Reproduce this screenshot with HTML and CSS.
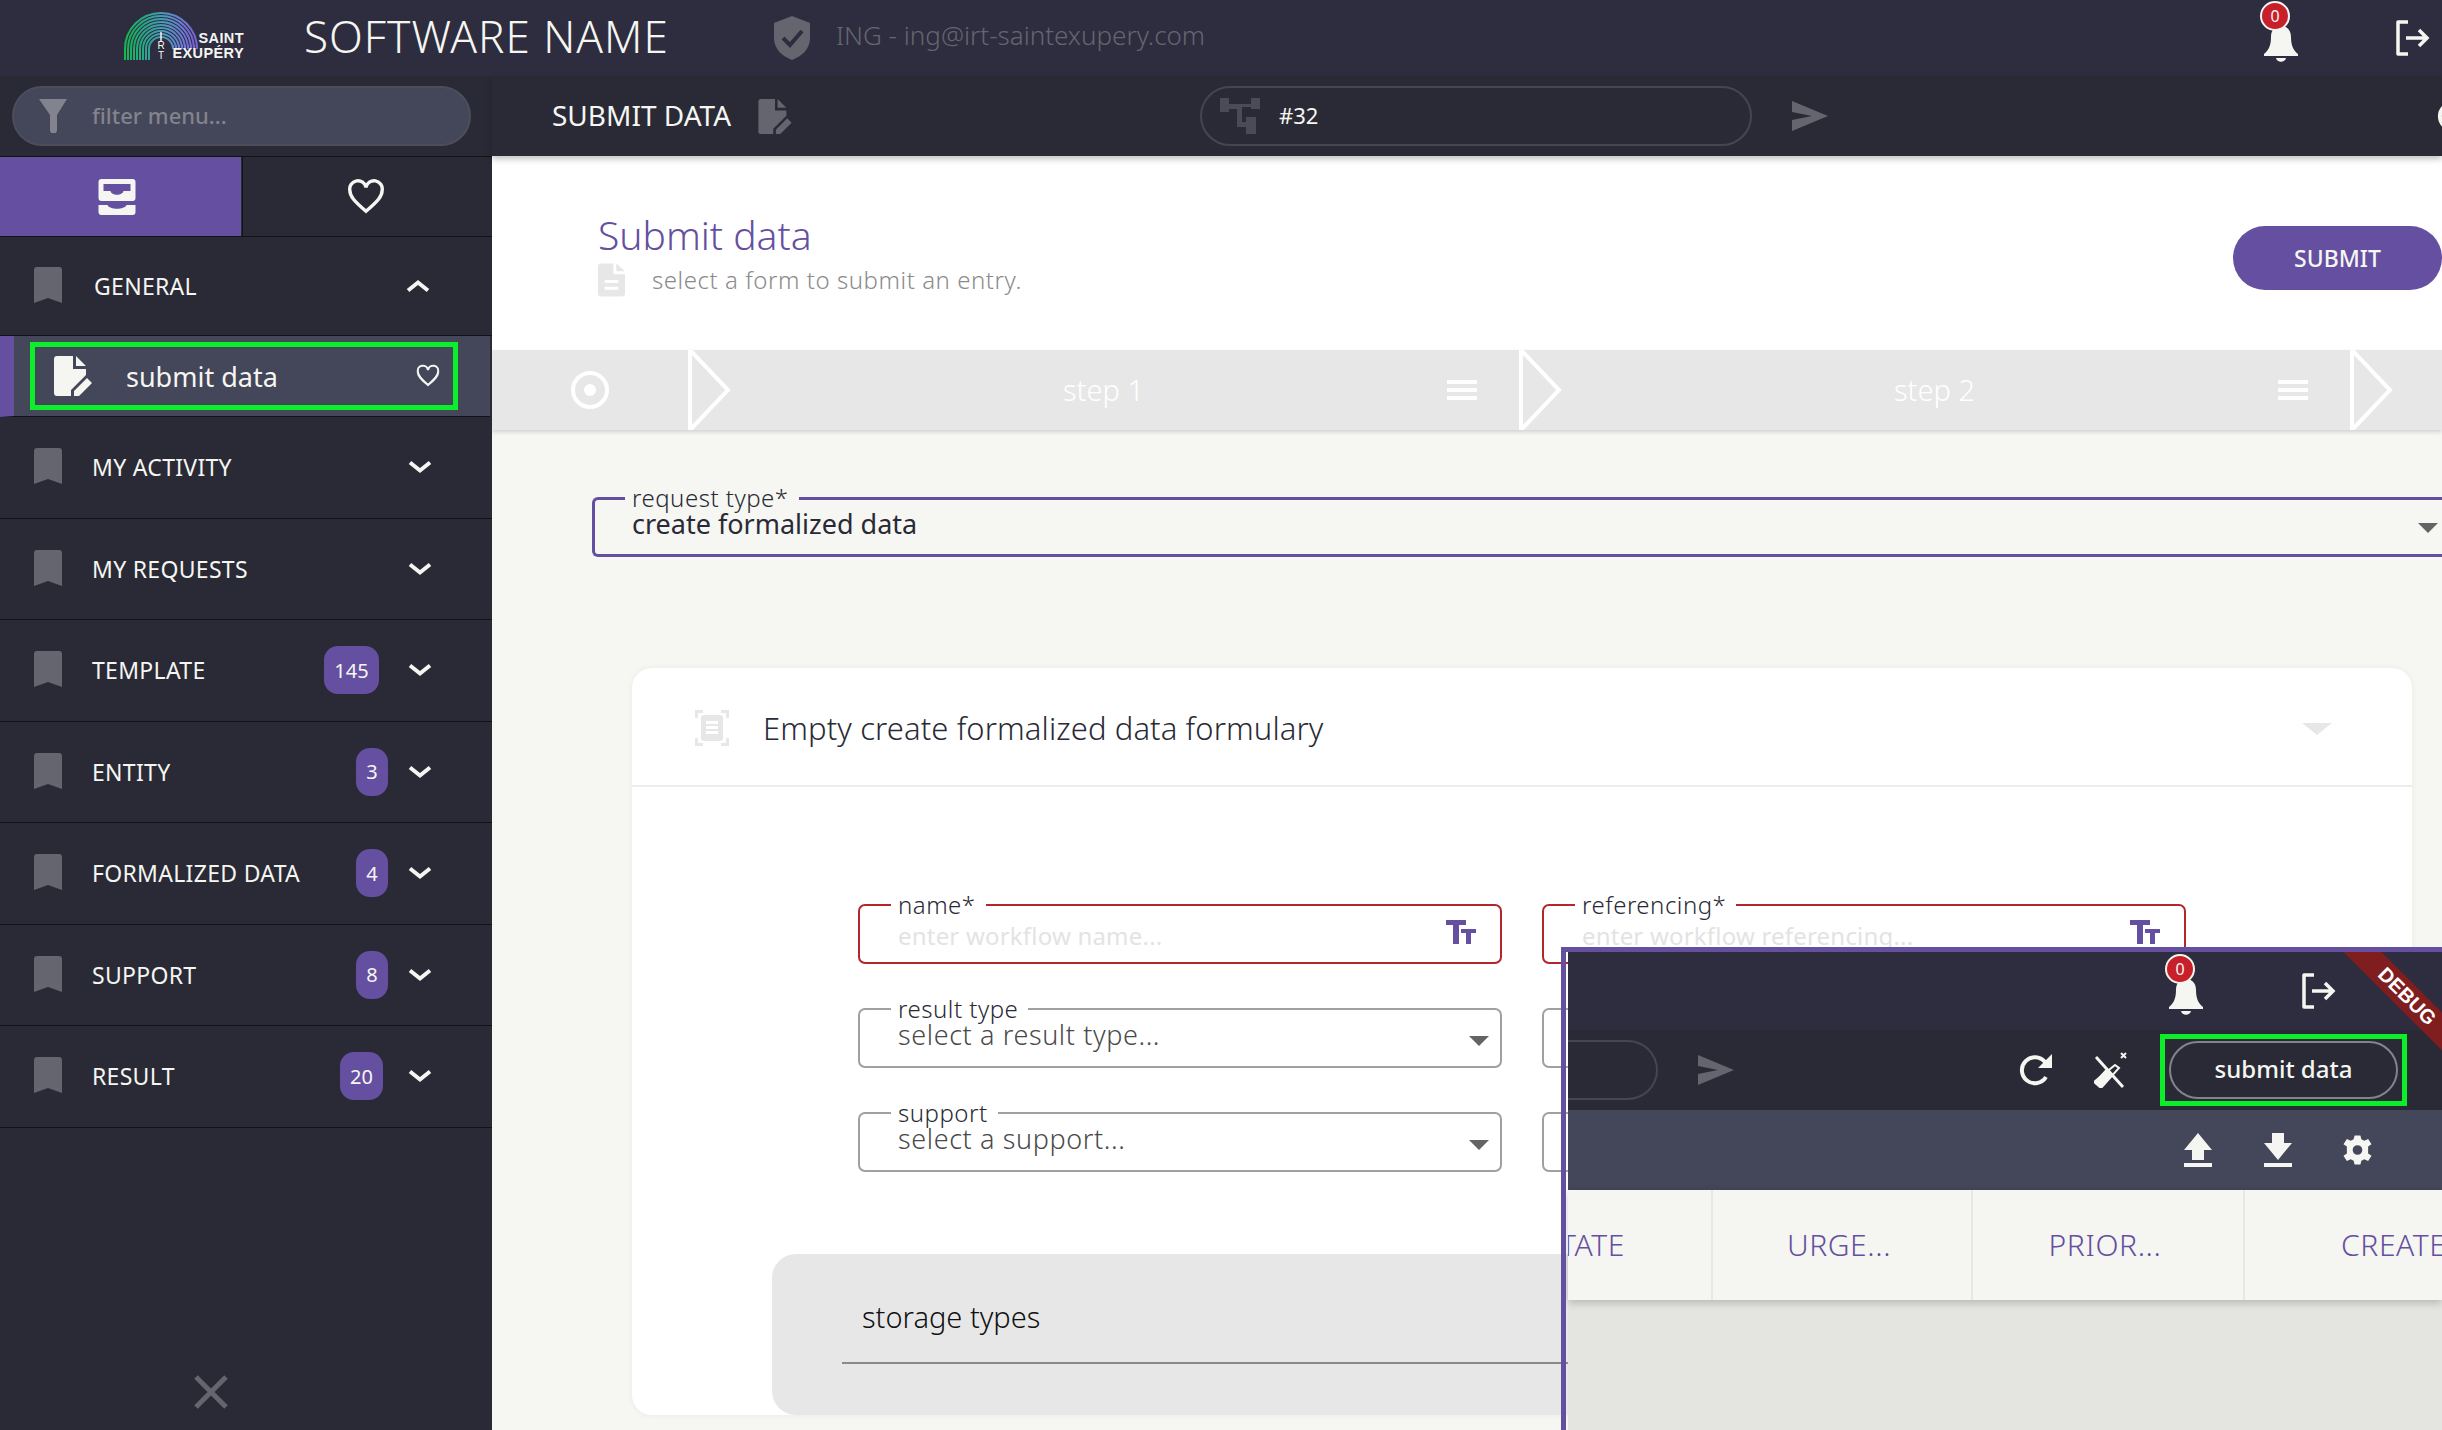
FILE: index.html
```html
<!DOCTYPE html>
<html lang="en">
<head>
  <meta charset="UTF-8" />
  <title>Software Name - Submit data</title>
  <link rel="stylesheet" href="styles.css">
</head>
<body>
  <!-- icon sprite -->
  <svg class="sprite" aria-hidden="true">
    <symbol id="i-bookmark" viewBox="0 0 28 36"><path d="M3 0H25a3 3 0 0 1 3 3V36L14 31 0 36V3a3 3 0 0 1 3-3z"/></symbol>
    <symbol id="i-chevron" viewBox="0 0 24 14"><path d="M2 2.500 12 10.500 22 2.500" fill="none" stroke="currentColor" stroke-width="4"/></symbol>
    <symbol id="i-heart" viewBox="0 0 40 36"><path d="M20 33C7 22 3 17 3 11a8.500 8.500 0 0 1 17-3 8.500 8.500 0 0 1 17 3c0 6-4 11-17 22z" fill="none" stroke="currentColor" stroke-width="3.600"/></symbol>
    <symbol id="i-file-edit" viewBox="0 0 38 40"><path d="M3 0H19V13H32V19L17 34V40H3a3 3 0 0 1-3-3V3a3 3 0 0 1 3-3zM22 0 32 10H22zM33 22l5 5-13 13h-5v-5z" fill-rule="evenodd"/></symbol>
    <symbol id="i-funnel" viewBox="0 0 28 34"><path d="M0 0H28L18 16V31a3 3 0 0 1-7 0V16z"/></symbol>
    <symbol id="i-inbox" viewBox="0 0 37 36"><path d="M3 0H34a3 3 0 0 1 3 3V19a3 3 0 0 1-3 3H3a3 3 0 0 1-3-3V3a3 3 0 0 1 3-3zM5 5V12H12c1 5 12 5 13 0H32V5zM0 26H9c2 5 17 5 19 0H37V33a3 3 0 0 1-3 3H3a3 3 0 0 1-3-3z" fill-rule="evenodd"/></symbol>
    <symbol id="i-shield" viewBox="0 0 36 44"><path d="M18 0 36 7V22C36 33 28 40 18 44 8 40 0 33 0 22V7z"/><path d="M9 22l7 7 12-14" fill="none" stroke="#2e2d3f" stroke-width="4"/></symbol>
    <symbol id="i-bell" viewBox="0 0 36 36"><path d="M18 0c6 0 10 4 10 11 0 8 2 13 7 17v2H1v-2c5-4 7-9 7-17C8 4 12 0 18 0zM13 32h10c-1 5-9 5-10 0z"/></symbol>
    <symbol id="i-logout" viewBox="0 0 36 36"><path d="M14 2H4V34H14" fill="none" stroke="currentColor" stroke-width="3.500" stroke-linejoin="round"/><path d="M12 18H33M25 10l8 8-8 8" fill="none" stroke="currentColor" stroke-width="3.500"/></symbol>
    <symbol id="i-send" viewBox="0 0 36 30"><path d="M0 0 36 15 0 30V19L20 15 0 11z"/></symbol>
    <symbol id="i-tree" viewBox="0 0 40 36"><path d="M0 0H9V6H31V0H40V11H31V9H22V24H26V19H36V36H26V29H17V11H9V14H0z" fill-rule="evenodd"/></symbol>
    <symbol id="i-target" viewBox="0 0 40 40"><circle cx="20" cy="20" r="17" fill="none" stroke="currentColor" stroke-width="4"/><circle cx="20" cy="20" r="6"/></symbol>
    <symbol id="i-step" viewBox="0 0 44 80"><path d="M2 0V80L40 40z" fill="none" stroke="currentColor" stroke-width="4"/></symbol>
    <symbol id="i-menu" viewBox="0 0 30 20"><path d="M0 0H30V4H0zM0 8H30V12H0zM0 16H30V20H0z"/></symbol>
    <symbol id="i-file" viewBox="0 0 28 34"><path d="M3 0H16V11H28V31a3 3 0 0 1-3 3H3a3 3 0 0 1-3-3V3a3 3 0 0 1 3-3zM19 0 28 8H19zM7 17V20H21V17zM7 24V27H21V24z" fill-rule="evenodd"/></symbol>
    <symbol id="i-scan" viewBox="0 0 34 36"><path d="M0 0H8V3H3V8H0zM26 0H34V8H31V3H26zM0 28H3V33H8V36H0zM31 28H34V36H26V33H31zM9 5H25a3 3 0 0 1 3 3V28a3 3 0 0 1-3 3H9a3 3 0 0 1-3-3V8a3 3 0 0 1 3-3zM11 11V14H23V11zM11 16V19H23V16zM11 21V24H23V21z" fill-rule="evenodd"/></symbol>
    <symbol id="i-textsize" viewBox="0 0 30 24"><path d="M0 0H20V5H13V24H7V5H0zM15 9H30V13H25V24H20V13H15z"/></symbol>
    <symbol id="i-refresh" viewBox="0 0 34 34"><path d="M27 24a13 13 0 1 1-1-15" fill="none" stroke="currentColor" stroke-width="4"/><path d="M33 1V15H19z"/></symbol>
    <symbol id="i-tools" viewBox="0 0 36 36"><path d="M2 5 29 35" fill="none" stroke="currentColor" stroke-width="3"/><path d="M21 13l4 3-18 20-7-6zM27 1l5 5M32 1l-5 5" fill="none" stroke="currentColor" stroke-width="2"/><path d="M7 36 0 30 12 17l7 6z"/></symbol>
    <symbol id="i-upload" viewBox="0 0 28 34"><path d="M14 0 28 17H20V27H8V17H0zM0 30H28V34H0z"/></symbol>
    <symbol id="i-download" viewBox="0 0 28 34"><path d="M8 0H20V10H28L14 27 0 10H8zM0 30H28V34H0z"/></symbol>
    <symbol id="i-gear" viewBox="0 0 30 30"><path d="M12 0H18L19 4 22 5.500 26 3.500 29.500 9 26 11.500V18.500L29.500 21 26 26.500 22 24.500 19 26 18 30H12L11 26 8 24.500 4 26.500 .5 21 4 18.500V11.500L.5 9 4 3.500 8 5.500 11 4zM15 10a5 5 0 1 0 0 10 5 5 0 0 0 0-10z" fill-rule="evenodd"/></symbol>
    <symbol id="i-close" viewBox="0 0 34 34"><path d="M2 2 32 32M32 2 2 32" fill="none" stroke="currentColor" stroke-width="5"/></symbol>
  </svg>

  <!-- top bar -->
  <header class="topbar">
    <div class="logo">
      <svg class="logo-arcs" viewBox="0 0 74 48" aria-hidden="true">
        <defs>
          <linearGradient id="arcs" x1="0" y1="0" x2="74" y2="0" gradientUnits="userSpaceOnUse">
            <stop offset="0" stop-color="#12b84c"/>
            <stop offset=".3" stop-color="#2aa58c"/>
            <stop offset=".55" stop-color="#4a9bbd"/>
            <stop offset=".8" stop-color="#6f78d8"/>
            <stop offset="1" stop-color="#7a5fd6"/>
          </linearGradient>
        </defs>
        <g fill="none" stroke="url(#arcs)" stroke-width="2">
          <path d="M1 48V37A36 36 0 0 1 73 37V33"/>
          <path d="M4 48V37A33 33 0 0 1 70 37V33"/>
          <path d="M7 48V37A30 30 0 0 1 67 37V33"/>
          <path d="M10 48V37A27 27 0 0 1 64 37V33"/>
          <path d="M13 48V37A24 24 0 0 1 61 37V33"/>
          <path d="M16 48V37A21 21 0 0 1 58 37V33"/>
          <path d="M19 48V37A18 18 0 0 1 55 37V33"/>
          <path d="M22 48V37A15 15 0 0 1 52 37V33"/>
          <path d="M25 48V37A12 12 0 0 1 49 37V33"/>
        </g>
        <path d="M37 20V30" stroke="#f5f6f1" stroke-width="1.500"/>
      </svg>
      <span class="logo-irt">R<br>T</span>
      <span class="logo-text">SAINT<br>EXUPÉRY</span>
    </div>
    <h1 class="app-name">SOFTWARE NAME</h1>
    <svg class="ic ic-shield"><use href="#i-shield"/></svg>
    <span class="user">ING - ing@irt-saintexupery.com</span>
    <div class="bell">
      <svg class="ic ic-bell"><use href="#i-bell"/></svg>
      <span class="bell-count">0</span>
    </div>
    <svg class="ic ic-logout"><use href="#i-logout"/></svg>
  </header>

  <div class="layout">
    <!-- side menu -->
    <aside class="sidebar">
      <div class="filter">
        <div class="filter-pill">
          <svg class="ic ic-funnel"><use href="#i-funnel"/></svg>
          <span class="filter-text">filter menu...</span>
        </div>
      </div>
      <div class="tabs">
        <div class="tab active"><svg class="ic ic-tab"><use href="#i-inbox"/></svg></div>
        <div class="tab"><svg class="ic ic-tab"><use href="#i-heart"/></svg></div>
      </div>
      <nav class="menu">
        <div class="menu-row general">
          <svg class="ic ic-bookmark"><use href="#i-bookmark"/></svg>
          <span class="menu-label">GENERAL</span>
          <svg class="ic ic-chevron up"><use href="#i-chevron"/></svg>
        </div>
        <div class="menu-sub">
          <div class="sub-selected">
            <svg class="ic ic-sub"><use href="#i-file-edit"/></svg>
            <span class="sub-label">submit data</span>
            <svg class="ic ic-subheart"><use href="#i-heart"/></svg>
          </div>
        </div>
        <div class="menu-row">
          <svg class="ic ic-bookmark"><use href="#i-bookmark"/></svg>
          <span class="menu-label">MY ACTIVITY</span>
          <svg class="ic ic-chevron"><use href="#i-chevron"/></svg>
        </div>
        <div class="menu-row">
          <svg class="ic ic-bookmark"><use href="#i-bookmark"/></svg>
          <span class="menu-label">MY REQUESTS</span>
          <svg class="ic ic-chevron"><use href="#i-chevron"/></svg>
        </div>
        <div class="menu-row">
          <svg class="ic ic-bookmark"><use href="#i-bookmark"/></svg>
          <span class="menu-label">TEMPLATE</span>
          <span class="count wide">145</span>
          <svg class="ic ic-chevron"><use href="#i-chevron"/></svg>
        </div>
        <div class="menu-row">
          <svg class="ic ic-bookmark"><use href="#i-bookmark"/></svg>
          <span class="menu-label">ENTITY</span>
          <span class="count">3</span>
          <svg class="ic ic-chevron"><use href="#i-chevron"/></svg>
        </div>
        <div class="menu-row">
          <svg class="ic ic-bookmark"><use href="#i-bookmark"/></svg>
          <span class="menu-label">FORMALIZED DATA</span>
          <span class="count">4</span>
          <svg class="ic ic-chevron"><use href="#i-chevron"/></svg>
        </div>
        <div class="menu-row">
          <svg class="ic ic-bookmark"><use href="#i-bookmark"/></svg>
          <span class="menu-label">SUPPORT</span>
          <span class="count">8</span>
          <svg class="ic ic-chevron"><use href="#i-chevron"/></svg>
        </div>
        <div class="menu-row">
          <svg class="ic ic-bookmark"><use href="#i-bookmark"/></svg>
          <span class="menu-label">RESULT</span>
          <span class="count mid">20</span>
          <svg class="ic ic-chevron"><use href="#i-chevron"/></svg>
        </div>
      </nav>
      <div class="sidebar-foot"><svg class="ic ic-close"><use href="#i-close"/></svg></div>
    </aside>

    <div class="main-col">
      <!-- action bar -->
      <div class="subbar">
        <span class="subbar-title">SUBMIT DATA</span>
        <svg class="ic ic-subbar"><use href="#i-file-edit"/></svg>
        <div class="workflow-pill">
          <svg class="ic ic-tree"><use href="#i-tree"/></svg>
          <span class="workflow-id">#32</span>
        </div>
        <svg class="ic ic-send"><use href="#i-send"/></svg>
        <svg class="ic ic-cut"><use href="#i-refresh"/></svg>
      </div>

      <main class="content">
        <section class="page-head">
          <div>
            <h2 class="page-title">Submit data</h2>
            <p class="page-hint">
              <svg class="ic ic-file"><use href="#i-file"/></svg>
              select a form to submit an entry.
            </p>
          </div>
          <button class="btn-submit">SUBMIT</button>
        </section>

        <div class="steps">
          <div class="step-start"><svg class="ic ic-target"><use href="#i-target"/></svg></div>
          <div class="step">
            <svg class="ic ic-step"><use href="#i-step"/></svg>
            <span class="step-name">step 1</span>
            <svg class="ic ic-menu"><use href="#i-menu"/></svg>
          </div>
          <div class="step">
            <svg class="ic ic-step"><use href="#i-step"/></svg>
            <span class="step-name">step 2</span>
            <svg class="ic ic-menu"><use href="#i-menu"/></svg>
          </div>
          <div class="step"><svg class="ic ic-step"><use href="#i-step"/></svg></div>
        </div>

        <div class="form-area">
          <fieldset class="type-field">
            <legend>request type*</legend>
            <span class="type-value">create formalized data</span>
            <span class="caret dark"></span>
          </fieldset>

          <section class="card">
            <div class="card-head">
              <svg class="ic ic-scan"><use href="#i-scan"/></svg>
              <span class="card-title">Empty create formalized data formulary</span>
              <span class="caret big"></span>
            </div>
            <div class="card-body">
              <div class="field-grid">
                <fieldset class="field error">
                  <legend>name*</legend>
                  <span class="placeholder">enter workflow name...</span>
                  <svg class="ic ic-textsize"><use href="#i-textsize"/></svg>
                </fieldset>
                <fieldset class="field error">
                  <legend>referencing*</legend>
                  <span class="placeholder">enter workflow referencing...</span>
                  <svg class="ic ic-textsize"><use href="#i-textsize"/></svg>
                </fieldset>
                <fieldset class="field">
                  <legend>result type</legend>
                  <span class="select-value">select a result type...</span>
                  <span class="caret"></span>
                </fieldset>
                <fieldset class="field">
                  <legend>state</legend>
                  <span class="select-value">select a state...</span>
                  <span class="caret"></span>
                </fieldset>
                <fieldset class="field">
                  <legend>support</legend>
                  <span class="select-value">select a support...</span>
                  <span class="caret"></span>
                </fieldset>
                <fieldset class="field">
                  <legend>domain</legend>
                  <span class="select-value">select a domain...</span>
                  <span class="caret"></span>
                </fieldset>
              </div>
              <div class="storage">
                <div class="storage-title">storage types</div>
              </div>
            </div>
          </section>
        </div>
      </main>
    </div>
  </div>

  <!-- second window on top of the form -->
  <div class="debug-window">
    <div class="debug-ribbon">DEBUG</div>
    <div class="dw-top">
      <div class="bell dw-bell">
        <svg class="ic ic-bell"><use href="#i-bell"/></svg>
        <span class="bell-count">0</span>
      </div>
      <svg class="ic ic-logout dw-logout"><use href="#i-logout"/></svg>
    </div>
    <div class="dw-bar">
      <div class="dw-pill"></div>
      <svg class="ic ic-send dw-send"><use href="#i-send"/></svg>
      <svg class="ic ic-refresh"><use href="#i-refresh"/></svg>
      <svg class="ic ic-tools"><use href="#i-tools"/></svg>
      <div class="dw-selected"><div class="dw-btn">submit data</div></div>
    </div>
    <div class="dw-tools">
      <svg class="ic ic-upload"><use href="#i-upload"/></svg>
      <svg class="ic ic-download"><use href="#i-download"/></svg>
      <svg class="ic ic-gear"><use href="#i-gear"/></svg>
    </div>
    <div class="dw-head">
      <div class="dw-cell first">STATE</div>
      <div class="dw-cell urgency">URGE...</div>
      <div class="dw-cell priority">PRIOR...</div>
      <div class="dw-cell created">CREATED</div>
    </div>
  </div>
</body>
</html>
```

FILE: styles.css
```css
/* page */
html, body {
  margin: 0;
  height: 100%;
}
body {
  position: relative;
  overflow: hidden;
  font-family: "Noto Sans", "Open Sans", sans-serif;
  background-color: #292a36;
  color: #f5f6f1;
}
h1, h2, p {
  margin: 0;
  font-weight: 400;
}
.sprite {
  display: none;
}
.ic {
  display: block;
  flex: none;
  fill: currentColor;
}

/* top bar */
.topbar {
  display: flex;
  align-items: center;
  height: 76px;
  padding-left: 124px;
  background-color: #2e2d3f;
}
.logo {
  position: relative;
  flex: none;
  width: 120px;
  height: 48px;
  margin-top: -4px;
}
.logo-arcs {
  display: block;
  width: 74px;
  height: 48px;
}
.logo-irt {
  position: absolute;
  left: 32px;
  top: 29px;
  width: 10px;
  font-family: "Liberation Sans", sans-serif;
  font-size: 10px;
  line-height: 10px;
  text-align: center;
}
.logo-text {
  position: absolute;
  right: 0;
  top: 19px;
  font-family: "Liberation Sans", sans-serif;
  font-weight: 700;
  font-size: 14.500px;
  line-height: 15px;
  text-align: right;
  letter-spacing: .4px;
}
.app-name {
  flex: none;
  width: 470px;
  margin-left: 60px;
  margin-top: -5px;
  font-size: 44px;
  font-weight: 300;
  letter-spacing: 1px;
  white-space: nowrap;
}
.ic-shield {
  width: 36px;
  height: 44px;
  color: #64656f;
}
.user {
  margin-left: 26px;
  margin-top: -6px;
  font-size: 26px;
  font-weight: 300;
  color: #64656f;
}
.bell {
  position: relative;
  margin-left: auto;
  margin-top: 12px;
}
.ic-bell {
  width: 36px;
  height: 36px;
}
.bell-count {
  position: absolute;
  left: -3px;
  top: -25px;
  width: 26px;
  height: 26px;
  border: 2px solid #f5f6f1;
  border-radius: 50%;
  background-color: #c8202a;
  font-size: 16px;
  line-height: 26px;
  text-align: center;
}
.ic-logout {
  width: 36px;
  height: 36px;
  margin-left: 95px;
  margin-right: 12px;
}

/* layout */
.layout {
  display: flex;
  height: calc(100vh - 76px);
}
.sidebar {
  display: flex;
  flex-direction: column;
  flex: none;
  width: 492px;
  background-color: #292a36;
}
.main-col {
  display: flex;
  flex-direction: column;
  flex: 1;
  min-width: 0;
}

/* side menu */
.filter {
  height: 81px;
  padding: 10px 21px 0 12px;
  box-sizing: border-box;
  border-bottom: 1px solid #111118;
}
.filter-pill {
  display: flex;
  align-items: center;
  height: 60px;
  box-sizing: border-box;
  padding-left: 25px;
  border: 2px solid #4d4e5c;
  border-radius: 30px;
  background-color: #444659;
  font-size: 22px;
  font-weight: 500;
  color: #82838e;
}
.filter-text {
  margin: -3px 0 0 -1px;
}
.ic-funnel {
  width: 28px;
  height: 34px;
  margin-right: 26px;
  color: #82838e;
}
.tabs {
  display: flex;
  height: 80px;
  border-bottom: 1px solid #111118;
  box-sizing: border-box;
}
.tab {
  display: flex;
  justify-content: center;
  align-items: center;
  width: 246px;
}
.tab.active {
  width: 241px;
  padding-right: 8px;
  box-sizing: border-box;
  margin-right: 1px;
  background-color: #654fa0;
}
.tab + .tab {
  border-left: 1px solid #111118;
}
.ic-tab {
  width: 38px;
  height: 36px;
}
.menu-row {
  display: flex;
  align-items: center;
  height: 101.500px;
  box-sizing: border-box;
  padding-left: 34px;
  border-bottom: 1px solid #111118;
}
.menu-row.general {
  height: 99px;
}
.ic-bookmark {
  width: 28px;
  height: 36px;
  margin-top: -2px;
  fill: #64656f;
}
.menu-label {
  margin-left: 30px;
  margin-right: auto;
  font-size: 23px;
  letter-spacing: .3px;
  white-space: nowrap;
}
.general .menu-label {
  margin-left: 32px;
}
.ic-chevron {
  width: 24px;
  height: 14px;
  margin-left: 20px;
  margin-right: 60px;
}
.ic-chevron.up {
  margin-right: 62px;
  transform: rotate(180deg);
}
.count {
  display: flex;
  justify-content: center;
  align-items: center;
  width: 32px;
  height: 48px;
  border-radius: 14px;
  background-color: #654fa0;
  font-size: 20px;
}
.count.wide {
  width: 55px;
  margin-right: 9px;
}
.count.mid {
  width: 43px;
  margin-right: 5px;
}
.menu-sub {
  height: 81px;
  box-sizing: border-box;
  padding: 6px 32px 0 16px;
  border-left: 14px solid #654fa0;
  border-bottom: 1px solid #111118;
  background-color: #444659;
  margin-right: 2px;
}
.sub-selected {
  display: flex;
  align-items: center;
  height: 68px;
  box-sizing: border-box;
  padding-left: 19px;
  border: 5px solid #0dee2a;
}
.ic-sub {
  width: 38px;
  height: 40px;
}
.sub-label {
  margin-left: 34px;
  margin-right: auto;
  font-size: 27px;
}
.ic-subheart {
  width: 24px;
  height: 24px;
  margin-right: 13px;
}
.sidebar-foot {
  display: flex;
  justify-content: center;
  margin-top: auto;
  padding: 0 70px 21px 0;
}
.ic-close {
  width: 34px;
  height: 34px;
  color: #64656f;
}

/* action bar */
.subbar {
  display: flex;
  align-items: center;
  position: relative;
  height: 80px;
  flex: none;
  padding-left: 60px;
  box-shadow: 0 3px 6px rgba(0, 0, 0, .25);
  overflow: hidden;
}
.subbar-title {
  flex: none;
  width: 206px;
  margin-top: -2px;
  font-size: 28px;
  white-space: nowrap;
}
.ic-subbar {
  width: 34px;
  height: 35px;
  color: #64656f;
}
.workflow-pill {
  display: flex;
  flex: none;
  align-items: center;
  width: 552px;
  height: 60px;
  box-sizing: border-box;
  margin-left: 408px;
  padding-left: 18px;
  border: 2px solid #454652;
  border-radius: 30px;
  font-size: 22px;
}
.workflow-id {
  margin: -3px 0 0 -1px;
}
.ic-tree {
  width: 40px;
  height: 36px;
  margin-right: 20px;
  color: #4a4b57;
}
.ic-send {
  width: 36px;
  height: 30px;
  margin-left: 40px;
  color: #64656f;
}
.ic-cut {
  width: 34px;
  height: 34px;
  margin-left: 609px;
}

/* page header */
.content {
  flex: 1;
  min-height: 0;
  overflow: hidden;
  background-color: #f6f7f2;
}
.page-head {
  display: flex;
  justify-content: space-between;
  align-items: center;
  height: 194px;
  box-sizing: border-box;
  padding-left: 106px;
  background-color: #ffffff;
}
.page-title {
  font-size: 39px;
  font-weight: 300;
  line-height: 50px;
  color: #654fa0;
}
.page-hint {
  display: flex;
  align-items: center;
  gap: 27px;
  margin-top: 3px;
  font-size: 24px;
  font-weight: 300;
  letter-spacing: .55px;
  color: #8b8b8b;
}
.ic-file {
  width: 27px;
  height: 34px;
  color: #e7e7e7;
}
.btn-submit {
  width: 209px;
  height: 64px;
  margin-top: 9px;
  border: none;
  border-radius: 32px;
  background-color: #654fa0;
  color: #f5f6f1;
  font-family: inherit;
  font-size: 23px;
  font-weight: 500;
}

/* steps */
.steps {
  display: flex;
  height: 80px;
  background-color: #e7e7e7;
  color: #ffffff;
  box-shadow: 0 2px 4px rgba(0, 0, 0, .15);
}
.step-start {
  display: flex;
  align-items: center;
  width: 196px;
  flex: none;
  padding-left: 78px;
  box-sizing: border-box;
}
.ic-target {
  width: 40px;
  height: 40px;
}
.step {
  display: flex;
  align-items: center;
  width: 831px;
  flex: none;
}
.ic-step {
  width: 44px;
  height: 80px;
}
.step-name {
  flex: 1;
  margin-top: -2px;
  padding-left: 28px;
  font-size: 29px;
  font-weight: 300;
  text-align: center;
  white-space: nowrap;
}
.ic-menu {
  width: 30px;
  height: 20px;
  margin-right: 42px;
}

/* form */
.form-area {
  padding: 56px 0 0 100px;
  margin-right: -30px;
}
fieldset {
  margin: 0;
  min-width: 0;
}
.type-field {
  display: flex;
  align-items: center;
  height: 71px;
  box-sizing: border-box;
  padding: 0 28px 0 37px;
  border: 3px solid #654fa0;
  border-right: none;
  border-radius: 6px 0 0 6px;
}
.type-field legend,
.field legend {
  margin-left: -7px;
  padding: 0 10px 0 7px;
  font-size: 24px;
  font-weight: 300;
  letter-spacing: .5px;
  line-height: 24px;
  color: #292a36;
}
.type-value {
  flex: 1;
  margin-top: -17px;
  font-size: 27px;
  color: #292a36;
}
.caret {
  width: 0;
  height: 0;
  flex: none;
  margin-top: -6px;
  border-left: 10px solid transparent;
  border-right: 10px solid transparent;
  border-top: 10px solid #646464;
}
.caret.dark {
  margin-top: -8px;
  margin-right: 6px;
}
.caret.big {
  margin-top: 2px;
  margin-left: auto;
  margin-right: 80px;
  border-left-width: 15px;
  border-right-width: 15px;
  border-top-width: 12px;
  border-top-color: #e7e7e7;
}

.card {
  width: 1780px;
  margin: 111px 0 0 40px;
  border-radius: 20px;
  background-color: #ffffff;
  box-shadow: 0 0 6px rgba(0, 0, 0, .06);
}
.card-head {
  display: flex;
  align-items: center;
  height: 119px;
  box-sizing: border-box;
  padding: 2px 0 0 63px;
  border-bottom: 2px solid #ececec;
}
.ic-scan {
  width: 34px;
  height: 36px;
  color: #e7e7e7;
}
.card-title {
  margin-left: 34px;
  font-size: 31px;
  font-weight: 300;
  letter-spacing: .1px;
  color: #292a36;
  white-space: nowrap;
}
.card-body {
  padding: 106px 0 0 226px;
}
.field-grid {
  display: grid;
  grid-template-columns: 644px 644px;
  column-gap: 40px;
  row-gap: 33px;
}
.field {
  display: flex;
  align-items: center;
  height: 71px;
  box-sizing: border-box;
  padding: 0 11px 0 38px;
  border: 2px solid #a0a0a0;
  border-radius: 7px;
}
.field.error {
  border-color: #b3262b;
}
.placeholder,
.select-value {
  flex: 1;
  margin-top: -8px;
  font-weight: 300;
  white-space: nowrap;
}
.placeholder {
  font-size: 24px;
  font-weight: 400;
  letter-spacing: .2px;
  color: #e3e3e3;
}
.select-value {
  margin-top: -19px;
  font-size: 27px;
  letter-spacing: .6px;
  color: #4a4a4a;
}
.ic-textsize {
  width: 30px;
  height: 24px;
  margin-right: 13px;
  margin-top: -15px;
  color: #654fa0;
}
.storage {
  width: 1500px;
  height: 161px;
  box-sizing: border-box;
  margin: 82px 0 0 -86px;
  padding: 0 0 0 70px;
  border-radius: 24px;
  background-color: #e7e7e7;
}
.storage-title {
  height: 110px;
  box-sizing: border-box;
  padding: 44px 0 0 20px;
  border-bottom: 2px solid #8a8a8a;
  font-size: 29px;
  font-weight: 300;
  line-height: 38px;
  color: #111111;
}

/* debug window on top */
.debug-window {
  position: absolute;
  left: 1561px;
  top: 947px;
  right: 0;
  bottom: 0;
  display: flex;
  flex-direction: column;
  overflow: hidden;
  border-left: 5px solid #654fa0;
  border-top: 5px solid #654fa0;
  padding-left: 2px;
  background-color: #e4e5e0;
  background-clip: content-box;
}
.debug-ribbon {
  position: absolute;
  left: 741px;
  top: 31px;
  width: 200px;
  height: 27px;
  background-color: #7f1d1f;
  color: #ffffff;
  font-family: "Liberation Sans", sans-serif;
  font-size: 20px;
  font-weight: 700;
  line-height: 27px;
  text-align: center;
  transform: rotate(45deg);
}
.dw-top {
  display: flex;
  align-items: center;
  height: 78px;
  flex: none;
  background-color: #2e2d3f;
}
.dw-logout {
  margin-left: 96px;
  margin-right: 106px;
}
.dw-bar {
  display: flex;
  align-items: center;
  height: 80px;
  flex: none;
  background-color: #292a36;
}
.dw-pill {
  width: 90px;
  height: 60px;
  box-sizing: border-box;
  border: 2px solid #454652;
  border-left: none;
  border-radius: 0 30px 30px 0;
}
.dw-send {
  margin-left: 40px;
}
.ic-refresh {
  width: 34px;
  height: 34px;
  margin-left: auto;
}
.ic-tools {
  width: 36px;
  height: 36px;
  margin-left: 41px;
}
.dw-selected {
  margin: 0 35px 0 30px;
  padding: 2px 4px;
  border: 5px solid #0dee2a;
}
.dw-btn {
  width: 229px;
  height: 58px;
  box-sizing: border-box;
  border: 2px solid #82838e;
  border-radius: 29px;
  font-size: 24px;
  font-weight: 500;
  line-height: 52px;
  text-align: center;
}
.dw-tools {
  display: flex;
  align-items: center;
  justify-content: flex-end;
  height: 80px;
  flex: none;
  padding-right: 70px;
  background-color: #444659;
  color: #f5f6f1;
}
.ic-upload,
.ic-download {
  width: 28px;
  height: 34px;
  margin-right: 52px;
}
.ic-download {
  margin-right: 51px;
}
.ic-gear {
  width: 29px;
  height: 30px;
}
.dw-head {
  display: flex;
  height: 110px;
  flex: none;
  background-color: #f5f6f1;
  box-shadow: 0 3px 8px rgba(0, 0, 0, .2);
  color: #654fa0;
  font-size: 30px;
  font-weight: 300;
  letter-spacing: .6px;
  line-height: 110px;
}
.dw-cell {
  flex: none;
  box-sizing: border-box;
  border-right: 2px solid #e7e7e7;
  text-align: center;
  white-space: nowrap;
  overflow: hidden;
}
.dw-cell.first {
  width: 145px;
  padding-right: 86px;
  text-align: right;
  direction: rtl;
}
.dw-cell.urgency {
  width: 260px;
  padding-right: 6px;
}
.dw-cell.priority {
  width: 272px;
  padding-right: 6px;
}
.dw-cell.created {
  flex: 1;
  border: none;
  padding-left: 96px;
  text-align: left;
}
```
